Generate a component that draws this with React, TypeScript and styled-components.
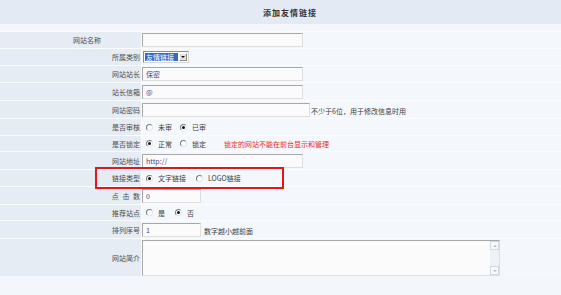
import React from 'react';
import styled, { createGlobalStyle } from 'styled-components';

const GlobalStyle = createGlobalStyle`
  html, body {
    margin: 0;
    padding: 0;
    background: #f3f7fb;
  }
  body {
    font-family: "Noto Sans CJK SC", "Liberation Sans", sans-serif;
    font-size: 7px;
    color: #555;
  }
`;

export default function App() {
  return (
    <>
      <GlobalStyle />
      <Page>
        <Header>添加友情链接</Header>
        <Table>
          <Row $h={16}>
            <Label $pr={40}>网站名称</Label>
            <Cell>
              <TextInput $w={161} defaultValue="" />
            </Cell>
          </Row>
          <Row $h={16}>
            <Label>所属类别</Label>
            <Cell>
              <Select>
                <SelectText>友情链接</SelectText>
                <DropButton />
              </Select>
            </Cell>
          </Row>
          <Row $h={16}>
            <Label>网站站长</Label>
            <Cell>
              <TextInput $w={161} defaultValue="保密" />
            </Cell>
          </Row>
          <Row $h={17}>
            <Label>站长信箱</Label>
            <Cell>
              <TextInput $w={161} defaultValue="@" />
            </Cell>
          </Row>
          <Row $h={17}>
            <Label>网站密码</Label>
            <Cell>
              <TextInput $w={168} type="password" defaultValue="" />
              <Hint $ml={1}>不少于6位，用于修改信息时用</Hint>
            </Cell>
          </Row>
          <Row $h={16}>
            <Label>是否审核</Label>
            <Cell>
              <Options>
                <Option $mr={8}>
                  <Radio />
                  未审
                </Option>
                <Option>
                  <Radio $checked />
                  已审
                </Option>
              </Options>
            </Cell>
          </Row>
          <Row $h={15}>
            <Label>是否锁定</Label>
            <Cell>
              <Options>
                <Option $mr={8}>
                  <Radio $checked />
                  正常
                </Option>
                <Option>
                  <Radio />
                  锁定
                </Option>
              </Options>
              <Warning>锁定的网站不能在前台显示和管理</Warning>
            </Cell>
          </Row>
          <Row $h={17}>
            <Label>网站地址</Label>
            <Cell>
              <TextInput $w={161} defaultValue="http://" />
            </Cell>
          </Row>
          <Row $h={16} $marked>
            <Label>链接类型</Label>
            <Cell>
              <Options>
                <Option $mr={10}>
                  <Radio $checked />
                  文字链接
                </Option>
                <Option>
                  <Radio />
                  LOGO链接
                </Option>
              </Options>
            </Cell>
            <Highlight />
          </Row>
          <Row $h={17}>
            <Label $spaced>点&nbsp;击&nbsp;数</Label>
            <Cell>
              <TextInput $w={59} defaultValue="0" />
            </Cell>
          </Row>
          <Row $h={15}>
            <Label>推荐站点</Label>
            <Cell>
              <Options>
                <Option $mr={10}>
                  <Radio />
                  是
                </Option>
                <Option>
                  <Radio $checked />
                  否
                </Option>
              </Options>
            </Cell>
          </Row>
          <Row $h={17}>
            <Label>排列序号</Label>
            <Cell>
              <TextInput $w={59} defaultValue="1" />
              <Hint $ml={3}>数字越小越前面</Hint>
            </Cell>
          </Row>
          <Row $h={37}>
            <Label>网站简介</Label>
            <Cell>
              <AreaBox>
                <Area defaultValue="" />
                <ScrollBar>
                  <ScrollButton $up />
                  <ScrollButton />
                </ScrollBar>
              </AreaBox>
            </Cell>
          </Row>
        </Table>
      </Page>
    </>
  );
}

const Page = styled.div`
  width: 561px;
  min-height: 295px;
  background: #f3f7fb;
`;

const Header = styled.div`
  height: 24px;
  background: #e3eaf3;
  display: flex;
  align-items: center;
  justify-content: center;
  padding-left: 19px;
  font-size: 8px;
  font-weight: bold;
  letter-spacing: 1px;
  color: #333;
`;

const Table = styled.div`
  margin-top: 7px;
  padding-top: 1px;
  display: flex;
  flex-direction: column;
  gap: 1px;
  background: #fafcfe;
`;

const Row = styled.div<{ $h: number; $marked?: boolean }>`
  display: grid;
  grid-template-columns: 141px 1fr;
  column-gap: 1px;
  height: ${(p) => p.$h}px;
  position: ${(p) => (p.$marked ? 'relative' : 'static')};
`;

const Label = styled.div<{ $pr?: number; $spaced?: boolean }>`
  background: #e5ecf4;
  display: flex;
  align-items: center;
  justify-content: flex-end;
  padding-right: ${(p) => p.$pr ?? 1}px;
  white-space: nowrap;
  word-spacing: ${(p) => (p.$spaced ? 2 : 0)}px;
  color: #4c4c4c;
`;

const Cell = styled.div`
  background: #f4f8fc;
  display: flex;
  align-items: center;
  white-space: nowrap;
`;

const TextInput = styled.input<{ $w: number }>`
  width: ${(p) => p.$w}px;
  height: 14px;
  box-sizing: border-box;
  margin: 0;
  padding: 0 3px;
  border: 1px solid;
  border-color: #a7a7a7 #dedede #dedede #a7a7a7;
  background: #fbfbfb;
  font-family: inherit;
  font-size: 7px;
  color: #4a3f86;
  outline: none;
`;

const Hint = styled.span<{ $ml: number }>`
  margin-left: ${(p) => p.$ml}px;
  align-self: flex-end;
  padding-bottom: 2px;
  color: #3c3c3c;
`;

const Options = styled.div`
  display: flex;
  align-items: center;
  padding-left: 4px;
  color: #3c3c3c;
`;

const Option = styled.span<{ $mr?: number }>`
  display: inline-flex;
  align-items: center;
  gap: 5px;
  margin-right: ${(p) => p.$mr ?? 0}px;
`;

const Radio = styled.span<{ $checked?: boolean }>`
  width: 7px;
  height: 7px;
  box-sizing: border-box;
  border-radius: 50%;
  border: 1px solid;
  border-color: #7a7a7a #e4e4e4 #e4e4e4 #7a7a7a;
  background: #fff;
  position: relative;

  &::after {
    content: '';
    display: ${(p) => (p.$checked ? 'block' : 'none')};
    position: absolute;
    left: 1px;
    top: 1px;
    width: 3px;
    height: 3px;
    border-radius: 50%;
    background: #111;
  }
`;

const Warning = styled.span`
  margin-left: 18px;
  color: #ef2a2a;
`;

const Select = styled.div`
  margin-left: 1px;
  width: 46px;
  height: 12px;
  box-sizing: border-box;
  display: flex;
  gap: 1px;
  padding: 1px;
  border: 1px solid;
  border-color: #8c8c8c #d6d6d6 #d6d6d6 #8c8c8c;
  background: #fff;
`;

const SelectText = styled.span`
  flex: 1;
  background: #3169c6;
  color: #fff;
  line-height: 8px;
  padding-left: 1px;
`;

const DropButton = styled.span`
  width: 8px;
  box-sizing: border-box;
  background: #e4e2dc;
  border: 1px solid;
  border-color: #fff #8a8a8a #8a8a8a #fff;
  display: flex;
  align-items: center;
  justify-content: center;

  &::after {
    content: '';
    border-left: 2px solid transparent;
    border-right: 2px solid transparent;
    border-top: 2px solid #111;
  }
`;

const AreaBox = styled.div`
  width: 358px;
  height: 36px;
  margin-top: 1px;
  box-sizing: border-box;
  display: flex;
  border: 1px solid;
  border-color: #a7a7a7 #dedede #dedede #a7a7a7;
  background: #fbfbfb;
`;

const Area = styled.textarea`
  flex: 1;
  margin: 0;
  padding: 2px;
  border: none;
  resize: none;
  background: transparent;
  font-family: inherit;
  font-size: 7px;
  outline: none;
`;

const ScrollBar = styled.div`
  width: 9px;
  display: flex;
  flex-direction: column;
  justify-content: space-between;
  background: #edf2f9;
`;

const ScrollButton = styled.span<{ $up?: boolean }>`
  height: 9px;
  box-sizing: border-box;
  border: 1px solid #d3d8e0;
  background: #f7f9fc;
  display: flex;
  align-items: center;
  justify-content: center;

  &::after {
    content: '';
    border-left: 2px solid transparent;
    border-right: 2px solid transparent;
    ${(p) => (p.$up ? 'border-bottom: 2px solid #b8bcc4;' : 'border-top: 2px solid #b8bcc4;')}
  }
`;

const Highlight = styled.div`
  position: absolute;
  left: 95px;
  top: -3px;
  width: 189px;
  height: 22px;
  box-sizing: border-box;
  border: 2px solid #e3161e;
  pointer-events: none;
`;
